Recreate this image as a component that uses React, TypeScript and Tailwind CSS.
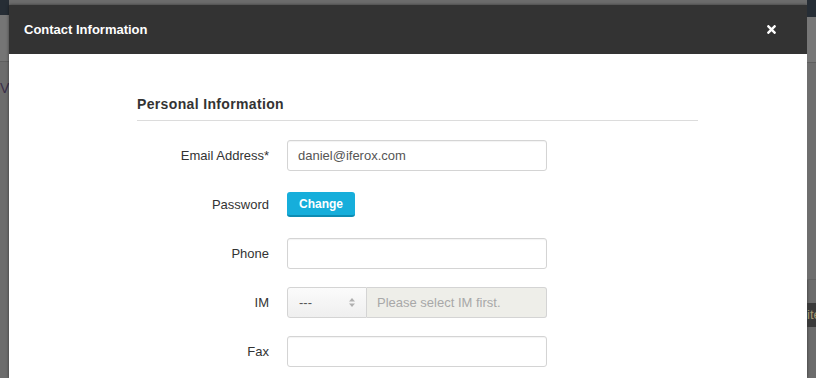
import { FaTimes } from "react-icons/fa";

const font = { fontFamily: '"Liberation Sans", Arial, sans-serif' };

function Row({ label, children }: { label: string; children: React.ReactNode }) {
  return (
    <div className="flex h-[31px] items-center">
      <label className="w-[132px] pr-0 text-right text-[13px] text-[#333]">{label}</label>
      <div className="ml-[18px] flex h-full w-[260px] items-center">{children}</div>
    </div>
  );
}

function TextInput({ value }: { value?: string }) {
  return (
    <div className="flex h-full w-full items-center rounded-[3px] border border-[#d4d4d4] bg-white px-[10px] text-[13px] text-[#555] shadow-[inset_0_1px_1px_rgba(0,0,0,0.05)]">
      {value}
    </div>
  );
}

export default function App() {
  return (
    <div className="flex h-[378px] w-[816px] flex-col overflow-hidden bg-[#6c6c6c]" style={font}>
      <div className="flex flex-1">
        {/* left page strip behind overlay */}
        <div className="flex w-[9px] flex-col">
          <div className="h-[15px] bg-[#262d35]" />
          <div className="h-[47px] border-b border-[#5f5f5f] bg-[#757575]" />
          <div className="mt-[18px] overflow-hidden whitespace-nowrap text-[14px] leading-[16px] text-[#3b2f4a]">Vi</div>
          <div className="flex-1" />
        </div>

        {/* modal */}
        <div className="mt-[5px] flex w-[798px] flex-col bg-white shadow-[0_0_3px_rgba(0,0,0,0.5)]">
          <div className="flex h-[49px] items-center justify-between bg-[#333333] pl-[15px] pr-[29px]">
            <span className="text-[13px] font-bold text-white">Contact Information</span>
            <FaTimes className="h-[13px] w-[13px] text-white" />
          </div>

          <div className="pl-[128px] pt-[40px]">
            <div className="w-[561px] border-b border-[#dcdcdc] pb-[6px]">
              <h2 className="text-[14px] leading-[20px] font-bold tracking-[0.35px] text-[#333]">
                Personal Information
              </h2>
            </div>

            <div className="mt-[19px] flex flex-col gap-[18px]">
              <Row label="Email Address*">
                <TextInput value="daniel@iferox.com" />
              </Row>
              <Row label="Password">
                <button className="h-[25px] w-[68px] rounded-[3px] border-b-2 border-[#0d8cb3] bg-[#16aedb] text-[12px] font-bold text-white">
                  Change
                </button>
              </Row>
              <Row label="Phone">
                <TextInput />
              </Row>
              <Row label="IM">
                <div className="flex h-full w-full">
                  <div className="flex h-full w-[80px] items-center justify-between rounded-l-[3px] border border-[#d4d4d4] bg-gradient-to-b from-[#fbfbfb] to-[#efefef] pl-[11px] pr-[11px] text-[13px] text-[#555]">
                    <span>---</span>
                    <svg width="6" height="9" viewBox="0 0 6 9">
                      <path d="M3 0 L6 3.5 H0 Z" fill="#b0b0b0" />
                      <path d="M3 9 L6 5.5 H0 Z" fill="#b0b0b0" />
                    </svg>
                  </div>
                  <div className="flex h-full flex-1 items-center rounded-r-[3px] border border-l-0 border-[#d4d4d4] bg-[#eeeee9] pl-[10px] text-[13px] text-[#a8a8a8]">
                    Please select IM first.
                  </div>
                </div>
              </Row>
              <Row label="Fax">
                <TextInput />
              </Row>
            </div>
          </div>
        </div>

        {/* right page strip behind overlay */}
        <div className="flex w-[9px] flex-col">
          <div className="h-[17px] bg-[#262d35]" />
          <div className="h-[46px] border-b border-[#5f5f5f] bg-[#777777]" />
          <div className="h-[217px] border-b border-[#626262] bg-[#6e6e6e]" />
          <div className="mt-[23px] flex h-[24px] items-center overflow-hidden whitespace-nowrap bg-[#3a3a3a] text-[13px] text-[#a59b73]">
            ite
          </div>
          <div className="flex-1" />
        </div>
      </div>
    </div>
  );
}
